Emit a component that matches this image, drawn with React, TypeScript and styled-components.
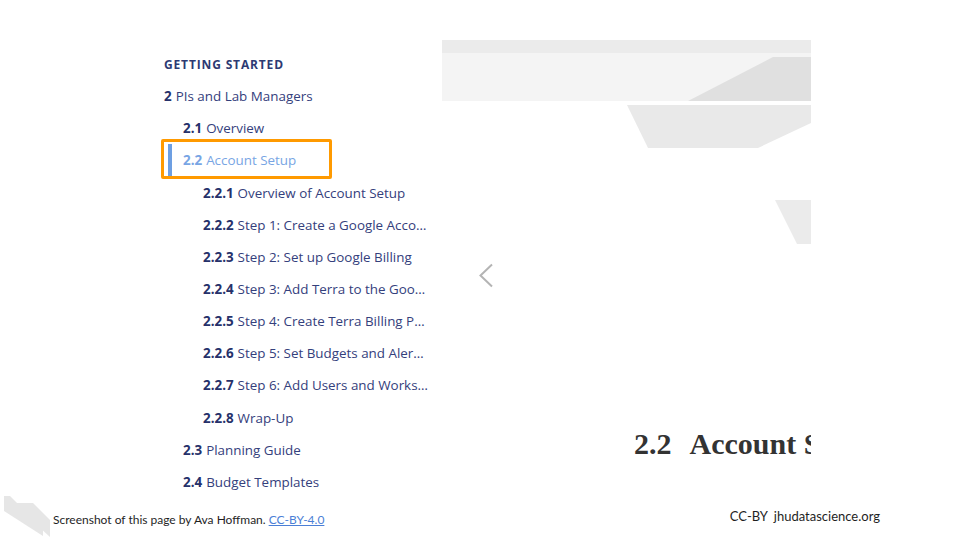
import React, { FC } from "react";
import styled, { createGlobalStyle } from "styled-components";

const GlobalStyle = createGlobalStyle`
  html, body {
    margin: 0;
    padding: 0;
    background: #ffffff;
  }
`;

type NavItem = {
  num: string;
  text: string;
  level: 0 | 1 | 2;
  active?: boolean;
};

const navItems: NavItem[] = [
  { num: "2", text: "PIs and Lab Managers", level: 0 },
  { num: "2.1", text: "Overview", level: 1 },
  { num: "2.2", text: "Account Setup", level: 1, active: true },
  { num: "2.2.1", text: "Overview of Account Setup", level: 2 },
  { num: "2.2.2", text: "Step 1: Create a Google Acco…", level: 2 },
  { num: "2.2.3", text: "Step 2: Set up Google Billing", level: 2 },
  { num: "2.2.4", text: "Step 3: Add Terra to the Goo…", level: 2 },
  { num: "2.2.5", text: "Step 4: Create Terra Billing P…", level: 2 },
  { num: "2.2.6", text: "Step 5: Set Budgets and Aler…", level: 2 },
  { num: "2.2.7", text: "Step 6: Add Users and Works…", level: 2 },
  { num: "2.2.8", text: "Wrap-Up", level: 2 },
  { num: "2.3", text: "Planning Guide", level: 1 },
  { num: "2.4", text: "Budget Templates", level: 1 },
];

const indent = [0, 19, 39];

const Slide = styled.div`
  width: 960px;
  height: 540px;
  display: flex;
  flex-direction: column;
  overflow: hidden;
`;

const Shot = styled.div`
  height: 495px;
  flex-shrink: 0;
  display: flex;
  padding: 40px 0 0 164px;
  box-sizing: border-box;
`;

const Sidebar = styled.nav`
  width: 278px;
  padding-top: 8px;
  display: flex;
  flex-direction: column;
  font-family: "Open Sans", "DejaVu Sans", sans-serif;
  font-size: 13.4px;
  font-weight: 500;
`;

const SectionTitle = styled.div`
  height: 32.15px;
  flex-shrink: 0;
  display: flex;
  align-items: center;
  font-weight: 700;
  font-size: 12px;
  letter-spacing: 0.85px;
  color: #2d3a73;
`;

const Row = styled.div<{ $level: number; $active?: boolean }>`
  position: relative;
  height: 32.15px;
  flex-shrink: 0;
  display: flex;
  align-items: center;
  white-space: nowrap;
  box-sizing: border-box;
  color: ${(p) => (p.$active ? "#78a5e4" : "#34407c")};
  margin-left: ${(p) => (p.$active ? indent[p.$level] - 15 : indent[p.$level])}px;
  padding-left: ${(p) => (p.$active ? 11 : 0)}px;
  border-left: ${(p) => (p.$active ? "4px solid #6d9fe2" : "none")};

  ${(p) =>
    p.$active &&
    `
    &::after {
      content: "";
      position: absolute;
      left: -11px;
      top: -5px;
      width: 171px;
      height: 40px;
      border: 3px solid #ff9a00;
      border-radius: 2px;
      box-sizing: border-box;
    }
  `}
`;

const Num = styled.span<{ $active?: boolean }>`
  font-weight: 700;
  color: ${(p) => (p.$active ? "#78a5e4" : "#26316a")};
  margin-right: 4px;
`;

const Main = styled.main`
  width: 369px;
  overflow: hidden;
  display: flex;
  flex-direction: column;
`;

const Banner = styled.svg`
  display: block;
  flex-shrink: 0;
`;

const PrevArrow = styled.svg`
  display: block;
  flex-shrink: 0;
  margin: 18px 0 0 36px;
`;

const Heading = styled.h1`
  margin: 139px 0 0 192px;
  white-space: nowrap;
  font-family: "Liberation Serif", "DejaVu Serif", serif;
  font-weight: 700;
  font-size: 30px;
  line-height: 34px;
  color: #333333;
`;

const HeadingNum = styled.span`
  margin-right: 18px;
`;

const Footer = styled.footer`
  flex: 1;
  display: flex;
  align-items: center;
  padding: 0 80px 0 4px;
  font-family: Lato, "Liberation Sans", sans-serif;
  color: #1f1f1f;
`;

const Logo = styled.svg`
  display: block;
  align-self: flex-end;
  margin-bottom: 3px;
`;

const Credit = styled.span`
  font-size: 12px;
  margin-left: 3px;
  margin-top: 3px;
`;

const LicenceLink = styled.a`
  color: #4b7fd6;
  text-decoration: underline;
  margin-left: 3px;
`;

const Site = styled.span`
  margin-left: auto;
  font-size: 13px;
  margin-bottom: 3px;
  word-spacing: 3px;
`;

const Nav: FC = () => (
  <Sidebar>
    <SectionTitle>GETTING STARTED</SectionTitle>
    {navItems.map((item) => (
      <Row key={item.num} $level={item.level} $active={item.active}>
        <Num $active={item.active}>{item.num}</Num>
        {item.text}
      </Row>
    ))}
  </Sidebar>
);

export default function App() {
  return (
    <>
      <GlobalStyle />
      <Slide>
        <Shot>
          <Nav />
          <Main>
            <Banner width="369" height="205" viewBox="0 0 369 205">
              <rect x="0" y="0" width="369" height="13" fill="#ebebeb" />
              <rect x="0" y="13" width="369" height="48" fill="#f4f4f4" />
              <polygon points="246,61 331,17 369,17 369,61" fill="#e0e0e0" />
              <polygon points="185,65 369,65 369,83 316,108 206,108" fill="#e9e9e9" />
              <polygon points="333,160 369,160 369,204 355,204" fill="#ebebeb" />
            </Banner>
            <PrevArrow width="16" height="25" viewBox="0 0 16 25">
              <polyline
                points="14,1.5 2.5,12.5 14,23.5"
                fill="none"
                stroke="#b4b4b4"
                strokeWidth="2"
              />
            </PrevArrow>
            <Heading>
              <HeadingNum>2.2</HeadingNum>Account Setup
            </Heading>
          </Main>
        </Shot>
        <Footer>
          <Logo width="46" height="42" viewBox="0 0 46 42">
            <polygon points="0,1 6,1 39,34 39,41 0,16" fill="#e6e6e6" />
            <polygon points="9,8 29,8 46,25 46,42" fill="#e6e6e6" />
          </Logo>
          <Credit>
            Screenshot of this page by Ava Hoffman.
            <LicenceLink href="#">CC-BY-4.0</LicenceLink>
          </Credit>
          <Site>CC-BY jhudatascience.org</Site>
        </Footer>
      </Slide>
    </>
  );
}
